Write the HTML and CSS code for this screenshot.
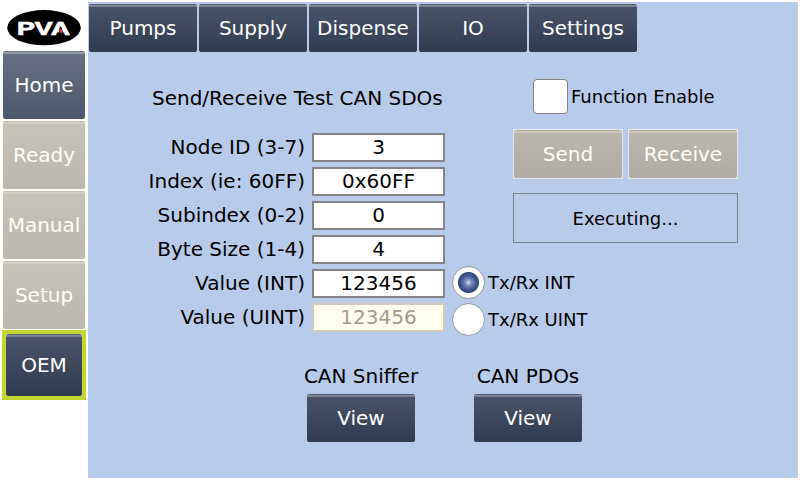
FILE: index.html
```html
<!DOCTYPE html>
<html lang="en">
<head>
<meta charset="utf-8">
<title>CAN Test</title>
<link rel="stylesheet" href="styles.css">
</head>
<body>
<div class="screen">
  <aside class="sidebar">
    <svg class="logo" width="88" height="51" viewBox="0 0 88 51" role="img" aria-label="Logo">
      <ellipse cx="44" cy="27.7" rx="36.8" ry="17.6" fill="#000"/>
      <text class="logo-text" x="17" y="35" textLength="53" lengthAdjust="spacingAndGlyphs">PVA</text>
      <path d="M57.4 36L60.9 26.4L64.4 36Z" fill="#000"/>
      <path d="M60.9 27.5L62.4 31A1.6 1.6 0 1 1 59.4 31Z" fill="#c8324a"/>
    </svg>
    <button class="btn side home">Home</button>
    <div class="side-group">
      <button class="btn side off">Ready</button>
      <button class="btn side off">Manual</button>
      <button class="btn side off">Setup</button>
    </div>
    <div class="selected"><button class="btn">OEM</button></div>
  </aside>
  <main class="main">
    <nav class="tabs">
      <button class="btn">Pumps</button>
      <button class="btn">Supply</button>
      <button class="btn">Dispense</button>
      <button class="btn">IO</button>
      <button class="btn">Settings</button>
    </nav>
    <div class="content">
      <section class="form">
        <h1 class="title">Send/Receive Test CAN SDOs</h1>
        <div class="row"><span class="label">Node ID (3-7)</span><div class="field">3</div></div>
        <div class="row"><span class="label">Index (ie: 60FF)</span><div class="field">0x60FF</div></div>
        <div class="row"><span class="label">Subindex (0-2)</span><div class="field">0</div></div>
        <div class="row"><span class="label">Byte Size (1-4)</span><div class="field">4</div></div>
        <div class="row"><span class="label">Value (INT)</span><div class="field">123456</div></div>
        <div class="row"><span class="label">Value (UINT)</span><div class="field field-off">123456</div></div>
      </section>
      <section class="control">
        <div class="panel">
          <div class="enable"><span class="check"></span><span>Function Enable</span></div>
          <div class="actions">
            <div class="frame"><button class="btn gray">Send</button></div>
            <div class="frame"><button class="btn gray">Receive</button></div>
          </div>
          <div class="status">Executing...</div>
        </div>
        <div class="radios">
          <div class="option"><span class="radio on"></span><span>Tx/Rx INT</span></div>
          <div class="option"><span class="radio"></span><span>Tx/Rx UINT</span></div>
        </div>
      </section>
    </div>
    <div class="views">
      <div class="view"><span>CAN Sniffer</span><button class="btn">View</button></div>
      <div class="view"><span>CAN PDOs</span><button class="btn">View</button></div>
    </div>
  </main>
</div>
</body>
</html>
```
FILE: styles.css
```css
* { box-sizing: border-box; }

body {
  margin: 0;
  width: 800px;
  height: 480px;
  overflow: hidden;
  background: #fff;
  color: #000;
  font: 20px/24px "DejaVu Sans", sans-serif;
  white-space: nowrap;
}

.screen { display: flex; height: 480px; }

.btn {
  display: block;
  width: 108px;
  height: 48px;
  padding: 0;
  border: 0;
  border-radius: 2px;
  color: #fff;
  font: inherit;
  text-align: center;
  background:
    linear-gradient(#515b6d 0 1px, #858c9b 1px 2px, #747d8e 2px 3px, transparent 3px),
    linear-gradient(#4b556a, #2f3b4e);
}

/* Sidebar */
.sidebar { width: 88px; }
.logo { display: block; }
.logo-text { font: bold 18.5px "Liberation Sans", sans-serif; fill: #fff; stroke: #fff; stroke-width: .7px; }
.side { width: 82px; height: 68px; margin-left: 3px; }
.home {
  background:
    linear-gradient(#6d7483 0 1px, #9299a6 1px 3px, transparent 3px),
    linear-gradient(#687184, #4c586b);
}
.side-group {
  display: flex;
  flex-direction: column;
  gap: 2px;
  padding: 2px 0 1px;
  margin-left: 2px;
  background: #fffff3;
}
.side-group .side { margin-left: 1px; }
.off {
  color: #fffff0;
  background:
    linear-gradient(#c0beb0 0 1px, #d3d0c5 1px 3px, transparent 3px),
    linear-gradient(#c6c3b7, #bbb7b1);
}
.selected {
  width: 84px;
  height: 70px;
  margin-left: 2px;
  border: 4px solid #c1d72f;
  background: #fff;
}
.selected .btn { width: 76px; height: 62px; }

/* Main area */
.main {
  width: 710px;
  height: 476px;
  margin-top: 2px;
  background: #b9cbea;
}
.tabs { display: flex; gap: 2px; padding: 2px 0 0 1px; }
.content { display: flex; gap: 7px; height: 304px; }

.form { width: 357px; padding-top: 34px; }
.title {
  margin: 0 3px 23px 64px;
  font-size: 20px;
  font-weight: normal;
  line-height: 24px;
}
.row {
  display: flex;
  gap: 7px;
  height: 29px;
  margin-bottom: 5px;
  justify-content: flex-end;
  line-height: 28px;
}
.field {
  width: 133px;
  height: 29px;
  border: 2px solid #858383;
  background: #fff;
  line-height: 25px;
  text-align: center;
}
.field-off { border-color: #d5c9b7; background: #fffff0; color: #a29a8c; }

.control { padding-top: 27px; font-size: 18px; }
.panel { width: 225px; margin-left: 61px; }
.enable { display: flex; align-items: center; gap: 3px; height: 35px; margin-left: 20px; }
.check { width: 35px; height: 35px; border: 1px solid #858383; border-radius: 4px; background: #fff; }
.actions { display: flex; gap: 5px; margin-top: 15px; }
.frame { width: 110px; height: 50px; padding: 1px; background: #e6e5e1; font-size: 20px; }
.gray {
  color: #fffff0;
  background:
    linear-gradient(#b3aea4 0 1px, #cbc5bd 1px 3px, transparent 3px),
    linear-gradient(#bbb7b1, #aeaca5);
}
.status {
  height: 50px;
  margin-top: 14px;
  border: 1px solid #7b838c;
  line-height: 49px;
  text-align: center;
}
.radios { display: flex; flex-direction: column; gap: 4px; margin-top: 23px; }
.option { display: flex; align-items: center; gap: 3px; height: 33px; }
.radio { width: 33px; height: 33px; border: 1px solid #999; border-radius: 50%; background: #fff; }
.on { background: radial-gradient(circle, #e6eaf5 0, #a5b3d5 1.5px, #6b80b3 4px, #465b91 7px, #304579 10px, #fff 11px); }

.views { display: flex; gap: 59px; padding: 8px 0 0 219px; }
.view { display: flex; flex-direction: column; align-items: center; gap: 6px; width: 108px; }
```
